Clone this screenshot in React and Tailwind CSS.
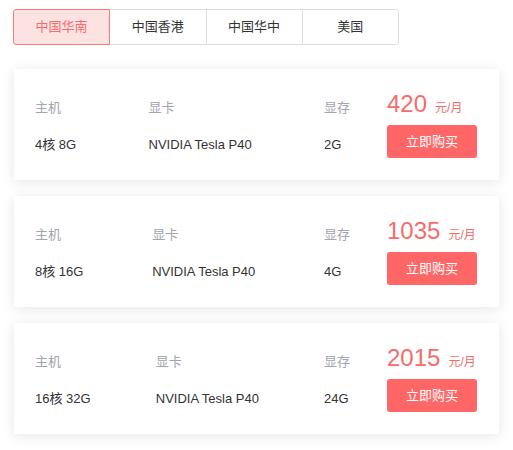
import React from "react";

const tabs = ["中国华南", "中国香港", "中国华中", "美国"];
const plans = [
  { cpu: "4核 8G", gpu: "NVIDIA Tesla P40", mem: "2G", price: "420" },
  { cpu: "8核 16G", gpu: "NVIDIA Tesla P40", mem: "4G", price: "1035" },
  { cpu: "16核 32G", gpu: "NVIDIA Tesla P40", mem: "24G", price: "2015" },
];

function Col({ label, value }) {
  return (
    <div className="flex flex-col">
      <div className="text-[13px] leading-5 text-[#a1a5ad] whitespace-nowrap">{label}</div>
      <div className="mt-[17px] text-[13px] leading-5 text-[#333333] whitespace-nowrap">{value}</div>
    </div>
  );
}

export default function App() {
  return (
    <div
      className="bg-white min-h-[450px] pt-[9px] pl-[13px]"
      style={{ fontFamily: '"Liberation Sans", "Noto Sans CJK SC", sans-serif' }}
    >
      <div className="flex w-[386px] h-[36px]">
        {tabs.map((t, i) => (
          <div
            key={t}
            className={
              i === 0
                ? "relative z-10 flex-1 flex items-center justify-center border border-[#f37b7b] bg-[#fde2e2] text-[#f56c6c] text-[13px] rounded-l-[3px]"
                : i === 3
                ? "flex-1 -ml-px flex items-center justify-center border border-[#dcdfe6] bg-white text-[#333333] text-[13px] rounded-r-[3px]"
                : "flex-1 -ml-px flex items-center justify-center border border-[#dcdfe6] bg-white text-[#333333] text-[13px]"
            }
          >
            {t}
          </div>
        ))}
      </div>

      <div className="ml-px mt-6 w-[485px] flex flex-col gap-4">
        {plans.map((p) => (
          <div
            key={p.price}
            className="h-[111px] bg-white shadow-[0_2px_12px_0_rgba(0,0,0,0.1)] flex items-start pl-[21px] pr-[22px]"
          >
            <div className="w-[315px] pt-[29px] flex justify-between">
              <Col label="主机" value={p.cpu} />
              <Col label="显卡" value={p.gpu} />
              <Col label="显存" value={p.mem} />
            </div>
            <div className="ml-[37px] w-[90px] pt-[20px] flex flex-col">
              <div className="leading-[30px] h-[30px] whitespace-nowrap text-[#f56c6c]">
                <span className="text-[24px]">{p.price}</span>
                <span className="text-[12px] ml-2">元/月</span>
              </div>
              <button className="mt-[6px] w-[90px] h-[33px] rounded-[3px] bg-[#ff6666] text-white text-[13px] flex items-center justify-center">
                立即购买
              </button>
            </div>
          </div>
        ))}
      </div>
    </div>
  );
}
